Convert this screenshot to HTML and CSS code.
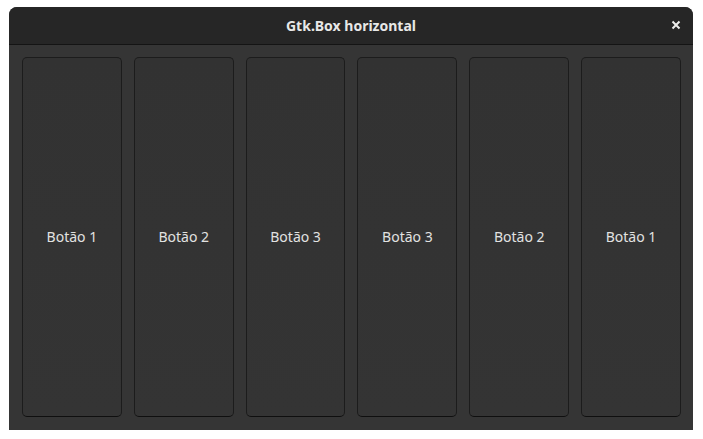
FILE: index.html
```html
<!DOCTYPE html>
<html lang="pt">
<head>
<meta charset="utf-8">
<title>Gtk.Box horizontal</title>
<link rel="stylesheet" href="styles.css">
</head>
<body>
<div class="window">
  <header class="headerbar">
    <span class="title">Gtk.Box horizontal</span>
    <button class="close" aria-label="Fechar">
      <svg width="10" height="10" viewBox="0 0 10 10"><path d="M1.5 1.5 L8.5 8.5 M8.5 1.5 L1.5 8.5" stroke="#eeeeec" stroke-width="2" stroke-linecap="butt"/></svg>
    </button>
  </header>
  <main class="box">
    <button class="btn">Botão 1</button>
    <button class="btn">Botão 2</button>
    <button class="btn">Botão 3</button>
    <button class="btn">Botão 3</button>
    <button class="btn">Botão 2</button>
    <button class="btn">Botão 1</button>
  </main>
</div>
</body>
</html>
```
FILE: styles.css
```css
html, body {
  margin: 0;
  padding: 0;
  background: #ffffff;
}
body {
  padding: 7px 10px 9px 9px;
  font-family: "Noto Sans", "Open Sans", sans-serif;
  color: #eeeeec;
}
.window {
  width: 684px;
  height: 423px;
  display: flex;
  flex-direction: column;
  border-radius: 8px 8px 0 0;
  overflow: hidden;
  background: #353535;
}
.headerbar {
  height: 37px;
  flex: none;
  display: flex;
  align-items: center;
  justify-content: center;
  position: relative;
  background: #262626;
  border-bottom: 1px solid #141414;
}
.title {
  font-weight: bold;
  font-size: 14px;
  color: #e8e8e7;
}
.close {
  position: absolute;
  right: 12px;
  top: 13px;
  width: 10px;
  height: 10px;
  padding: 0;
  border: 0;
  background: transparent;
  display: flex;
}
.box {
  flex: 1;
  display: flex;
  gap: 12px;
  padding: 12px 12px 13px 13px;
}
.btn {
  flex: 1;
  min-width: 0;
  margin: 0;
  padding: 0 0 2px 0;
  border: 1px solid #1c1c1c;
  border-bottom-color: #0f0f0f;
  border-radius: 5px;
  background: linear-gradient(#323232, #343434);
  color: #e2e2e1;
  font-family: "Noto Sans", "Open Sans", sans-serif;
  font-size: 14px;
}
```
